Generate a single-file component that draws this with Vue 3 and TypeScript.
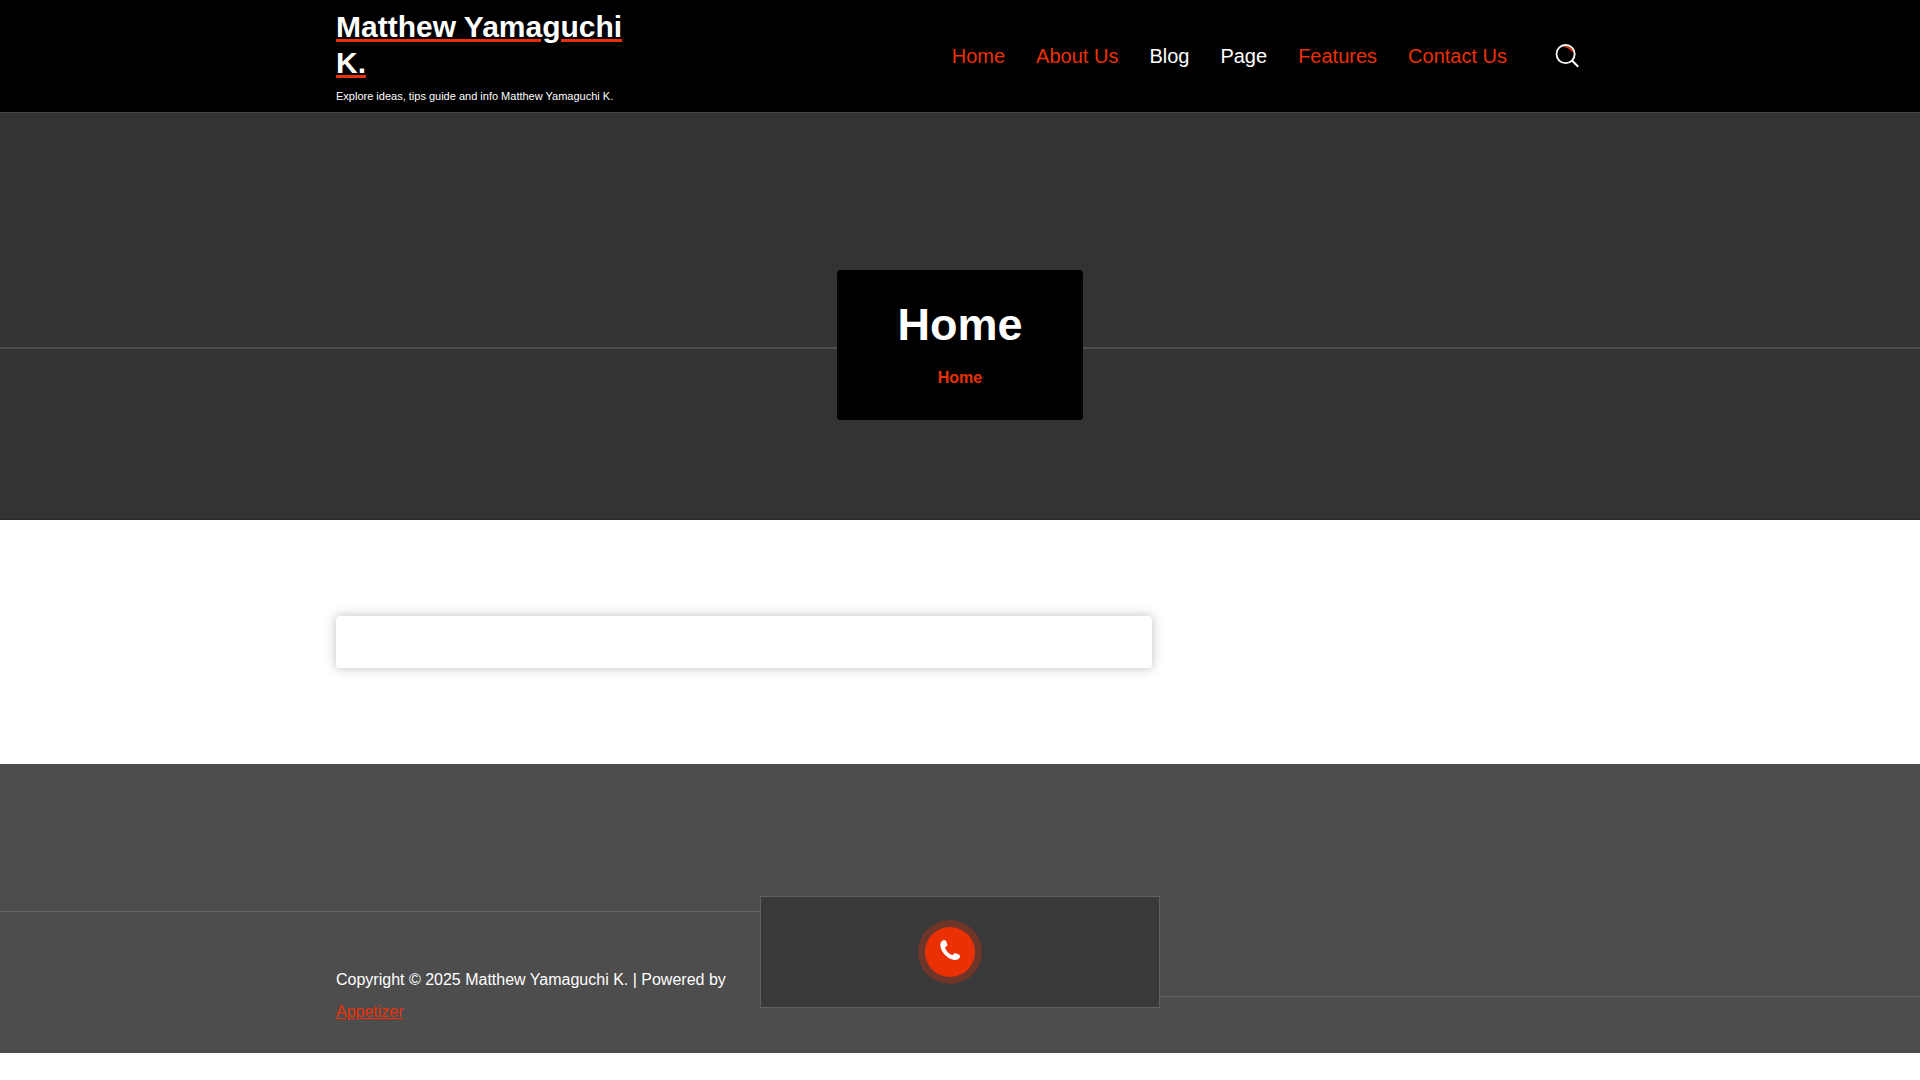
<script setup lang="ts">
interface NavItem {
  label: string
  active: boolean
}

const siteName = 'Matthew Yamaguchi K.'
const navItems: NavItem[] = [
  { label: 'Home', active: true },
  { label: 'About Us', active: true },
  { label: 'Blog', active: false },
  { label: 'Page', active: false },
  { label: 'Features', active: true },
  { label: 'Contact Us', active: true },
]
</script>

<template>
  <div class="page">
    <header class="header">
      <div class="container header-row">
        <div class="brand">
          <a class="brand-name" href="#">{{ siteName }}</a>
          <p class="tagline">Explore ideas, tips guide and info {{ siteName }}</p>
        </div>
        <nav class="nav" aria-label="Main">
          <a
            v-for="item in navItems"
            :key="item.label"
            class="nav-link"
            :class="{ active: item.active }"
            href="#"
          >{{ item.label }}</a>
        </nav>
        <button class="search" type="button" aria-label="Search">
          <svg viewBox="0 0 24 24" width="24" height="24" fill="none">
            <path d="M7.5 2.6C12 1 18 3.5 18.9 9.4C16 6 12.4 3.6 7.5 2.6Z" fill="#ec3006" />
            <circle cx="10.6" cy="10.1" r="9.1" stroke="#fff" stroke-width="1.8" />
            <path d="M17 16.500L23.200 22.700" stroke="#fff" stroke-width="2" />
          </svg>
        </button>
      </div>
    </header>

    <section class="hero">
      <span class="hero-line"></span>
      <div class="hero-box">
        <h1>Home</h1>
        <a class="crumb" href="#">Home</a>
      </div>
      <span class="hero-line"></span>
    </section>

    <main class="container main">
      <article class="card"></article>
    </main>

    <footer class="footer">
      <div class="band">
        <span class="line line-left"></span>
        <div class="call-box">
          <a class="call" href="#" aria-label="Call us">
            <svg viewBox="0 0 20 24" width="20" height="24" fill="#fff">
              <path d="M3.200 0.200C4.700 -0.300 5.900 0.600 6.500 2.200L7.200 4.200C7.600 5.400 7.200 6.100 6.200 6.500C5.200 6.900 4.900 7.500 5.300 8.600C6.500 11.500 8.900 13.900 11.700 15C12.500 15.300 13 15 13.400 14.200C13.900 13.200 14.700 12.900 15.700 13.300L18.300 14.300C19.700 14.900 20.300 15.900 19.800 17.200C19.100 19.200 16.600 20.300 14 19.900C7.500 18.900 1.300 12.700 0.400 6C0 3.300 1.100 0.900 3.200 0.200Z" />
            </svg>
          </a>
        </div>
        <span class="line line-right"></span>
      </div>
      <div class="container copyright">
        <p>Copyright © 2025 {{ siteName }} | Powered by <a href="#">Appetizer</a></p>
      </div>
    </footer>
  </div>
</template>

<style>
body {
  margin: 0;
  background: #fff;
}
</style>

<style scoped>
.page {
  font-family: "Liberation Sans", Arial, sans-serif;
  font-size: 16px;
  color: #fff;
}

.container {
  box-sizing: border-box;
  width: 65%;
  margin: 0 auto;
}

.header {
  background: #000;
  border-bottom: 1px solid #41464b;
}

.header-row {
  display: flex;
  align-items: center;
  min-height: 112px;
}

.brand {
  flex: 0 0 312px;
  align-self: flex-start;
  padding-top: 9px;
}

.brand-name {
  display: block;
  color: #fff;
  font-size: 30px;
  font-weight: 700;
  line-height: 36px;
  text-decoration: underline 3px #ec3006;
}

.tagline {
  margin: 7px 0 0;
  font-size: 11px;
  line-height: 16px;
}

.nav {
  display: flex;
  gap: 31px;
  margin-left: auto;
}

.nav-link {
  color: #fff;
  font-size: 20px;
  line-height: 32px;
  text-decoration: none;
}

.nav-link.active {
  color: #ec3006;
}

.search {
  display: flex;
  margin: 0 5px 0 48px;
  padding: 0;
  border: 0;
  background: none;
  cursor: pointer;
}

.hero {
  display: flex;
  align-items: center;
  padding: 157px 0 99px;
  background: #333;
  border-bottom: 1px solid #2f292b;
}

.hero-line {
  flex: 1;
  height: 2px;
  margin-top: 6px;
  background: #484c50;
}

.hero-box {
  box-sizing: border-box;
  min-width: 246px;
  padding: 28px 59px 27px;
  border-radius: 4px;
  background: #000;
  text-align: center;
}

h1 {
  margin: 0 0 11px;
  font-size: 45px;
  line-height: 54px;
}

.crumb {
  display: block;
  color: #ec3006;
  font-weight: 700;
  line-height: 30px;
  text-decoration: none;
}

.main {
  padding: 96px 0;
}

.card {
  max-width: 816px;
  min-height: 52px;
  border-radius: 4px;
  background: #fff;
  box-shadow: 0 0 12px rgba(0, 0, 0, 0.25);
}

.footer {
  display: grid;
  padding-top: 132px;
  background: #4d4d4d;
}

.band,
.copyright {
  grid-area: 1 / 1;
}

.band {
  display: flex;
  align-items: flex-start;
}

.line {
  flex: 1;
  height: 1px;
  background: #61666c;
}

.line-left {
  margin-top: 15px;
}

.line-right {
  margin-top: 100px;
}

.call-box {
  box-sizing: border-box;
  display: flex;
  align-items: center;
  justify-content: center;
  width: 400px;
  height: 112px;
  padding-right: 20px;
  border: 1px solid #5b6067;
  background: #393939;
}

.call {
  display: flex;
  align-items: center;
  justify-content: center;
  width: 50px;
  height: 50px;
  border-radius: 50%;
  background: #ec3006;
  box-shadow: 0 0 0 7px rgba(236, 48, 6, 0.3);
}

.copyright {
  padding: 68px 0 25px;
  pointer-events: none;
}

.copyright p {
  max-width: 400px;
  margin: 0;
  line-height: 32px;
}

.copyright a {
  color: #ec3006;
  pointer-events: auto;
}
</style>
